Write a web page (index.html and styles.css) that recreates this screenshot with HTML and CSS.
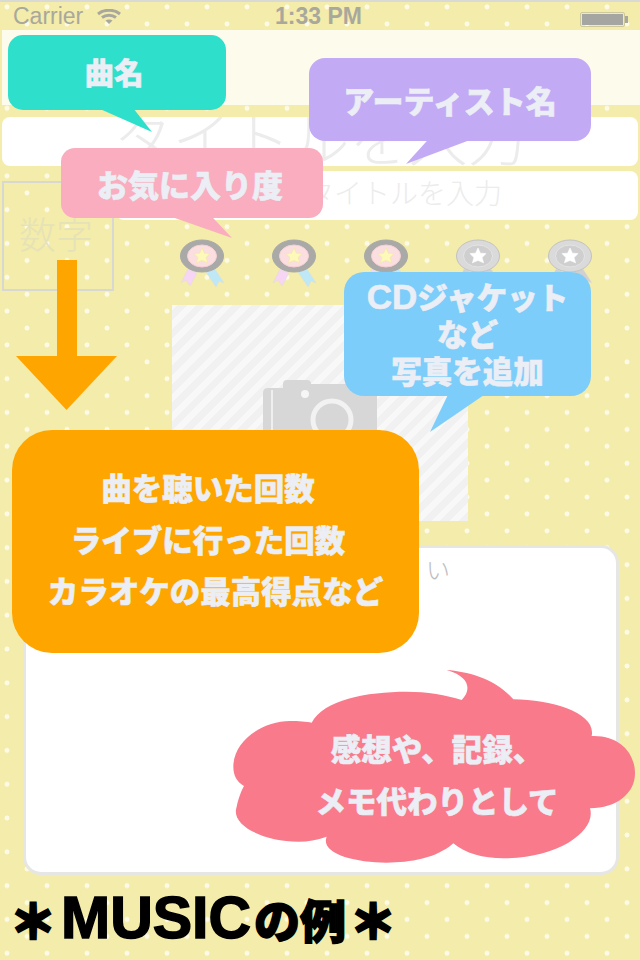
FILE: index.html
```html
<!DOCTYPE html>
<html lang="ja">
<head>
  <meta charset="utf-8">
  <title>MUSICの例</title>
  <link rel="stylesheet" href="styles.css">
</head>
<body>
  <svg class="defs" width="0" height="0">
    <symbol id="medal" viewBox="-23 -17 46 48">
      <polygon class="ribbon-l" points="-14,13 -5,17 -12,30 -16,24 -21,27"/>
      <polygon class="ribbon-r" points="4,16 13,13 22,27 17,25 14,31"/>
      <ellipse class="rim" rx="21.5" ry="16"/>
      <ellipse class="face" rx="14.5" ry="11"/>
      <polygon class="star" points="0,-8 2.400,-2.800 8,-2.400 4,1.600 5.600,6.800 0,4.400 -5.600,6.800 -4,1.600 -8,-2.400 -2.400,-2.800"/>
    </symbol>
  </svg>

  <div id="page">
    <div class="statusbar">
      <span class="carrier">Carrier</span>
      <svg class="wifi" viewBox="0 0 24 15" width="24" height="15">
        <path d="M1 5 C7 0 17 0 23 5" />
        <path d="M5 8.500 C9 5.500 15 5.500 19 8.500" />
        <path d="M12 15 L8.500 11.500 C10.500 10 13.500 10 15.500 11.500 Z" class="wifi-dot" />
      </svg>
      <span class="clock">1:33 PM</span>
      <div class="battery"><div class="battery-fill"></div></div>
    </div>
    <div class="navbar"></div>

    <div class="field field-big">タイトルを入力</div>

    <div class="midrow">
      <div class="numberbox">数字</div>
      <div>
        <div class="field field-small">タイトルを入力</div>
        <div class="medals">
          <svg class="medal"><use href="#medal"/></svg>
          <svg class="medal"><use href="#medal"/></svg>
          <svg class="medal"><use href="#medal"/></svg>
          <svg class="medal off"><use href="#medal"/></svg>
          <svg class="medal off"><use href="#medal"/></svg>
        </div>
      </div>
    </div>

    <div class="photo">
      <svg class="camera" viewBox="0 0 114 90" width="114" height="90">
        <path class="cam-body" d="M5 8 H20 V4 Q20 0 24 0 H44 Q48 0 48 4 H108 Q114 4 114 10 V90 H0 V13 Q0 8 5 8 Z"/>
        <rect class="cam-strip" x="8" y="10" width="2" height="80"/>
        <circle class="cam-hole" cx="42" cy="14" r="4"/>
        <circle class="cam-ring" cx="69" cy="40" r="19"/>
      </svg>
    </div>

    <div class="note">い</div>

    <div class="example"><span class="ast">＊</span><span class="example-latin">MUSIC</span>の例<span class="ast ast-end">＊</span></div>
  </div>

  <div class="bubble teal">曲名<i class="tail"></i></div>
  <div class="bubble purple">アーティスト名<i class="tail"></i></div>
  <div class="bubble pink">お気に入り度<i class="tail"></i></div>
  <div class="bubble blue">
    <span><span class="latin">CD</span>ジャケット</span>
    <span>など</span>
    <span>写真を追加</span>
    <i class="tail"></i>
  </div>

  <div class="arrow"><div class="arrow-shaft"></div><div class="arrow-head"></div></div>

  <div class="bubble orange">
    <span class="shift">曲を聴いた回数</span>
    <span class="shift">ライブに行った回数</span>
    <span>カラオケの最高得点など</span>
  </div>

  <div class="cloud">
    <svg viewBox="0 0 1260 690" width="420" height="230">
      <path d="M680 60 C745 65 825 85 880 148 C1000 150 1130 190 1115 258 C1200 255 1245 310 1245 370 C1245 430 1190 475 1110 475 C1130 540 1020 625 850 625 C790 625 735 610 700 580 C650 625 570 638 500 638 C400 638 300 610 320 560 C290 570 265 575 235 575 C130 575 30 525 50 470 C55 445 65 420 72 408 C50 395 40 375 40 350 C40 270 130 213 210 213 C235 213 260 215 275 218 C310 150 440 125 560 125 C620 125 680 135 725 150 C755 120 750 80 680 60 Z"/>
    </svg>
    <div class="cloud-text">
      <span>感想や、記録、</span>
      <span>メモ代わりとして</span>
    </div>
  </div>
</body>
</html>
```

FILE: styles.css
```css
body {
  margin: 0;
  width: 640px;
  height: 960px;
  overflow: hidden;
  position: relative;
  font-family: "Liberation Sans", "Noto Sans CJK JP", sans-serif;
  background-color: #f4ecaa;
  background-image:
    radial-gradient(circle, #fdfbe6 2.2px, transparent 2.8px),
    radial-gradient(circle, #fdfbe6 2.2px, transparent 2.8px);
  background-size: 40px 33.8px;
  background-position: -13px -10px, 7px 7px;
}

.defs {
  position: absolute;
}

#page {
  display: flex;
  flex-direction: column;
  height: 960px;
  border-top: 2px solid #d9d9d6;
  box-sizing: border-box;
}

/* status bar */
.statusbar {
  height: 28px;
  display: flex;
  align-items: center;
  position: relative;
  padding-left: 13px;
  color: #a9a89c;
  font-size: 23px;
}

.carrier {
  margin-right: 14px;
}

.wifi {
  fill: none;
  stroke: #a9a89c;
  stroke-width: 3;
}

.wifi-dot {
  fill: #a9a89c;
  stroke: none;
}

.clock {
  position: absolute;
  left: 275px;
  font-weight: bold;
}

.battery {
  position: absolute;
  left: 580px;
  top: 10px;
  width: 45px;
  height: 15px;
  border: 1px solid #cdc99c;
  border-radius: 2px;
  box-sizing: border-box;
  padding: 1px;
}

.battery::after {
  content: "";
  position: absolute;
  right: -4px;
  top: 3px;
  width: 3px;
  height: 7px;
  background: #a9a89c;
}

.battery-fill {
  height: 100%;
  background: #a5a5a1;
}

.navbar {
  height: 75px;
  margin-left: 2px;
  background: #fdfbec;
}

/* fields */
.field {
  background: #fff;
  border-radius: 8px;
  color: #ececec;
  overflow: hidden;
  box-sizing: border-box;
  height: 49px;
}

.field-big {
  margin: 12px 2px 0;
  font-size: 59px;
  line-height: 49px;
  text-align: center;
  font-weight: 300;
}

.field-small {
  font-size: 28px;
  line-height: 47px;
  padding-left: 190px;
  font-weight: 300;
  margin-right: 2px;
}

.midrow {
  display: grid;
  grid-template-columns: 112px 1fr;
  gap: 2px;
  margin: 5px 0 0 2px;
  height: 120px;
}

.numberbox {
  margin-top: 10px;
  height: 110px;
  box-sizing: border-box;
  border: 2px solid #d8d8d2;
  padding-right: 4px;
  font-size: 37px;
  line-height: 108px;
  text-align: center;
  color: #e6e2b8;
  font-weight: 300;
}

.medals {
  display: flex;
  gap: 46px;
  margin: 19px 0 0 63px;
}

.medal {
  width: 46px;
  height: 48px;
  display: block;
  --rim: #a9a9a7;
  --rim-line: #a9a9a7;
  --face: #fbdfe0;
  --face-line: #f6cfd4;
  --star: #fdf9b9;
  --star-line: #f2e6a6;
  --ribbon-l: #f7d5f4;
  --ribbon-r: #bfe8f6;
}

.medal.off {
  --rim: #dadada;
  --rim-line: #c2c2c2;
  --face: #cfcfcf;
  --face-line: #e4e4e4;
  --star: #fff;
  --star-line: #fff;
  --ribbon-l: #d0d0d0;
  --ribbon-r: #d0d0d0;
}

.rim { fill: var(--rim); stroke: var(--rim-line); }
.face { fill: var(--face); stroke: var(--face-line); }
.star { fill: var(--star); stroke: var(--star-line); stroke-width: 0.6; }
.ribbon-l { fill: var(--ribbon-l); stroke: #ddd; stroke-width: 0.5; }
.ribbon-r { fill: var(--ribbon-r); stroke: #ddd; stroke-width: 0.5; }

/* photo placeholder */
.photo {
  align-self: center;
  width: 296px;
  height: 216px;
  margin-top: 14px;
  position: relative;
  overflow: hidden;
  background: repeating-linear-gradient(-45deg, #f1f1f1 0, #f1f1f1 7px, #f8f8f8 7px, #f8f8f8 13px);
}

.camera {
  position: absolute;
  left: 91px;
  top: 75px;
}

.cam-body { fill: #d7d7d7; }
.cam-strip { fill: #efefef; }
.cam-hole { fill: #f6f6f6; }
.cam-ring { fill: none; stroke: #f2f2f2; stroke-width: 5; }

/* memo */
.note {
  margin: 24px 21px 0 23px;
  height: 330px;
  box-sizing: border-box;
  background: #fff;
  border: 3px solid #e6e6e4;
  border-radius: 18px;
  padding: 8px 0 0 400px;
  font-size: 24px;
  line-height: 30px;
  color: #bdbdbd;
  font-weight: 300;
}

.example {
  flex: 1;
  display: flex;
  align-items: center;
  padding-left: 10px;
  font-size: 46px;
  font-weight: 900;
  color: #000;
  -webkit-text-stroke: 1.5px #000;
}

.ast {
  width: 46px;
  text-align: center;
  -webkit-text-stroke: 3px #000;
}

.ast-end {
  margin-left: 4px;
}

.example-latin {
  font-size: 59px;
  font-weight: bold;
  margin: 0 3px 0 5px;
}

/* callouts lying over the screen */
.bubble {
  position: absolute;
  display: flex;
  flex-direction: column;
  align-items: center;
  justify-content: center;
  color: #eceef5;
  font-size: 30.5px;
  font-weight: 900;
  white-space: nowrap;
  -webkit-text-stroke: 0.6px #eceef5;
}

.tail {
  position: absolute;
  top: 100%;
  background: inherit;
}

.teal {
  left: 8px;
  top: 35px;
  width: 212px;
  height: 71px;
  padding: 0 6px 4px 0;
  border-radius: 15px;
  background: #2edfcb;
  font-size: 29.5px;
}

.teal .tail {
  left: 92px;
  width: 52px;
  height: 23px;
  margin-top: -1px;
  clip-path: polygon(0 0, 65% 0, 100% 100%);
}

.purple {
  left: 309px;
  top: 58px;
  width: 282px;
  height: 83px;
  border-radius: 16px;
  background: #c3aaf5;
  font-size: 31px;
}

.purple .tail {
  left: 97px;
  width: 64px;
  height: 24px;
  margin-top: -1px;
  clip-path: polygon(34% 0, 100% 0, 0 100%);
}

.pink {
  left: 61px;
  top: 148px;
  width: 258px;
  height: 70px;
  padding-right: 4px;
  border-radius: 14px;
  background: #f9adbf;
  font-size: 31px;
}

.pink .tail {
  left: 111px;
  width: 60px;
  height: 21px;
  margin-top: -1px;
  clip-path: polygon(0 0, 67% 0, 100% 100%);
}

.blue {
  left: 344px;
  top: 272px;
  width: 247px;
  height: 124px;
  border-radius: 20px;
  background: #7dcdfa;
  line-height: 37px;
}

.latin {
  font-size: 35px;
}

.blue .tail {
  left: 86px;
  width: 54px;
  height: 37px;
  margin-top: -1px;
  clip-path: polygon(33% 0, 100% 0, 0 100%);
}

.arrow {
  position: absolute;
  left: 16px;
  top: 260px;
  width: 101px;
  display: flex;
  flex-direction: column;
  align-items: center;
}

.arrow-shaft {
  width: 20px;
  height: 96px;
  background: #ffa500;
}

.arrow-head {
  width: 101px;
  height: 54px;
  background: #ffa500;
  clip-path: polygon(0 0, 100% 0, 50% 100%);
}

.orange {
  left: 12px;
  top: 430px;
  width: 407px;
  height: 223px;
  border-radius: 40px;
  background: #ffa500;
  line-height: 51.500px;
}

.shift {
  margin-right: 15px;
}

.cloud {
  position: absolute;
  left: 220px;
  top: 650px;
  width: 420px;
  height: 230px;
}

.cloud svg {
  display: block;
  fill: #f97a8b;
}

.cloud-text {
  position: absolute;
  left: 0;
  top: 74px;
  width: 434px;
  display: flex;
  flex-direction: column;
  align-items: center;
  color: #eceef5;
  font-size: 30.5px;
  font-weight: 900;
  line-height: 52px;
  white-space: nowrap;
  -webkit-text-stroke: 0.6px #eceef5;
}
```
